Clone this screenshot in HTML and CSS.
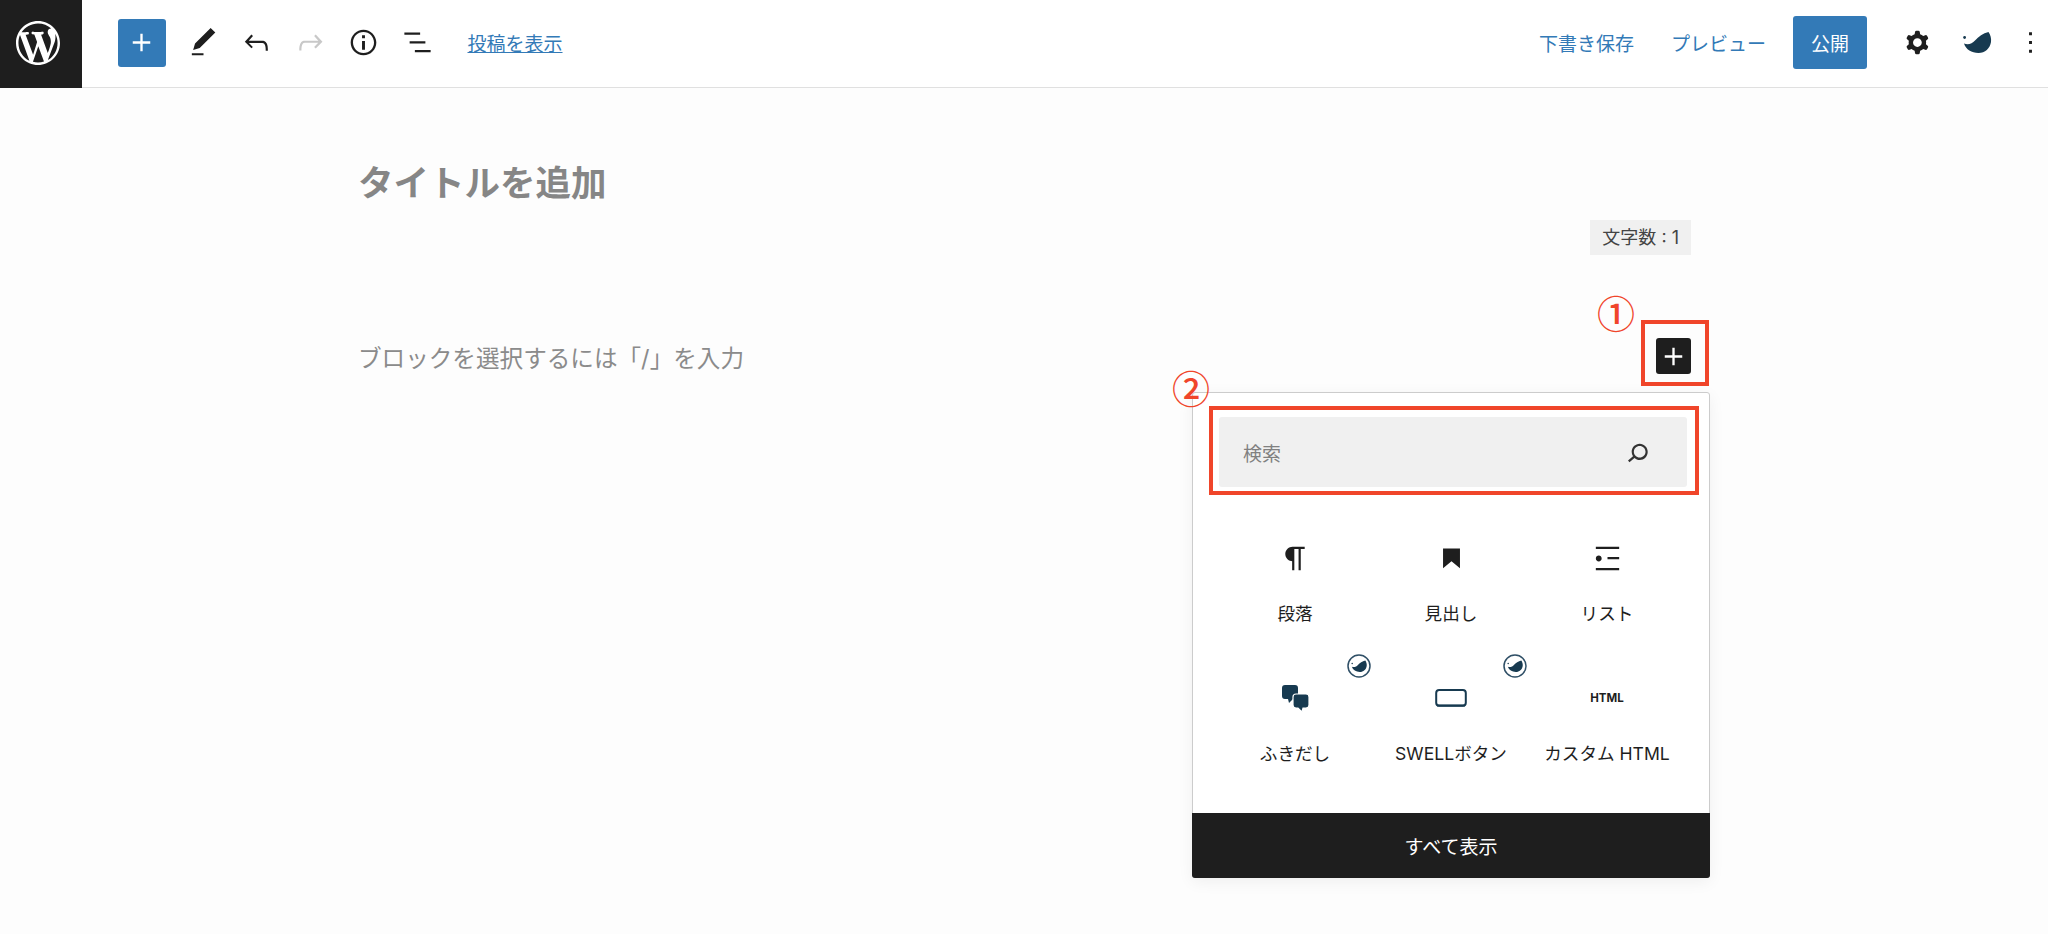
FILE: index.html
```html
<!DOCTYPE html>
<html lang="ja">
<head>
  <meta charset="UTF-8">
  <title>新規投稿を追加</title>
  <meta name="viewport" content="width=device-width, initial-scale=1.0">
  <link rel="stylesheet" href="styles.css">
</head>
<body>
  <div class="page">
    <header class="topbar">
      <a class="wp-logo">
        <svg viewBox="0 0 20 20" width="44" height="44"><path fill="#fff" d="M20 10c0-5.51-4.49-10-10-10C4.48 0 0 4.49 0 10c0 5.52 4.48 10 10 10 5.51 0 10-4.48 10-10zM7.78 15.37L4.37 6.22c.55-.02 1.17-.08 1.17-.08.5-.06.44-1.13-.06-1.11 0 0-1.45.11-2.37.11-.18 0-.37 0-.58-.01C4.12 2.69 6.87 1.11 10 1.11c2.33 0 4.45.87 6.05 2.34-.68-.11-1.65.39-1.65 1.58 0 .74.45 1.36.9 2.1.35.61.55 1.36.55 2.46 0 1.49-1.4 5-1.4 5l-3.03-8.37c.54-.02.82-.17.82-.17.5-.05.44-1.25-.06-1.22 0 0-1.44.12-2.38.12-.87 0-2.33-.12-2.33-.12-.5-.03-.56 1.2-.06 1.22l.92.08 1.26 3.41zM17.41 10c.24-.64.74-1.87.43-4.25.7 1.29 1.05 2.71 1.05 4.25 0 3.29-1.73 6.24-4.4 7.78.97-2.59 1.94-5.2 2.92-7.78zM6.1 18.09C3.12 16.65 1.11 13.53 1.11 10c0-1.3.23-2.48.72-3.59C3.25 10.3 4.67 14.2 6.1 18.09zm4.03-6.63l2.58 6.98c-.86.29-1.76.45-2.71.45-.79 0-1.57-.11-2.29-.33.81-2.38 1.62-4.74 2.42-7.1z"/></svg>
      </a>
      <button class="add-btn">
        <svg viewBox="0 0 24 24" width="35" height="35"><path fill="#fff" d="M18 11.2h-5.2V6h-1.6v5.2H6v1.6h5.2V18h1.6v-5.2H18z"/></svg>
      </button>
      <div class="tools">
        <span class="tool"><svg viewBox="0 0 24 24" width="35" height="35"><path d="M20.1 5.1L16.9 2 6.2 12.7l-1.3 4.4 4.5-1.3L20.1 5.1zM4 20.8h8v-1.5H4v1.5z"/></svg></span>
        <span class="tool"><svg viewBox="0 0 24 24" width="35" height="35"><path d="M18.3 11.7c-.6-.6-1.4-.9-2.3-.9H6.7l2.9-3.3-1.1-1-4.5 5L8.5 16l1-1-2.7-2.7H16c.5 0 .9.2 1.3.5 1 1 1 3.4 1 4.5v.3h1.5v-.2c0-1.5 0-4.3-1.5-5.7z"/></svg></span>
        <span class="tool tool-off"><svg viewBox="0 0 24 24" width="35" height="35"><path d="M15.6 6.5l-1.1 1 2.9 3.3H8c-.9 0-1.7.3-2.3.9-1.4 1.5-1.4 4.2-1.4 5.6v.2h1.5v-.3c0-1.1 0-3.5 1-4.5.3-.3.7-.5 1.3-.5h9.2L14.5 15l1.1 1.1 4.6-4.6-4.6-5z"/></svg></span>
        <span class="tool"><svg viewBox="0 0 24 24" width="35" height="35"><path d="M12 3.2c-4.8 0-8.8 3.9-8.8 8.8 0 4.8 3.9 8.8 8.8 8.8 4.8 0 8.8-3.9 8.8-8.8 0-4.8-4-8.8-8.8-8.8zm0 16c-4 0-7.2-3.3-7.2-7.2C4.8 8 8 4.8 12 4.8s7.2 3.3 7.2 7.2c0 4-3.2 7.2-7.2 7.2zM11 17h2v-6h-2v6zm0-8h2V7h-2v2z"/></svg></span>
        <span class="tool"><svg viewBox="0 0 24 24" width="35" height="35"><path d="M13.8 5.2H3v1.5h10.8V5.2zm-3.6 12v1.5H21v-1.5H10.2zm7.2-6H6.6v1.5h10.8v-1.5z"/></svg></span>
      </div>
      <a class="view-link">投稿を表示</a>
      <div class="actions">
        <a class="action-link">下書き保存</a>
        <a class="action-link">プレビュー</a>
        <button class="publish">公開</button>
        <span class="tool cog"><svg viewBox="0 0 24 24" width="35" height="35"><path fill-rule="evenodd" d="M10.289 4.836A1 1 0 0111.275 4h1.306a1 1 0 01.987.836l.244 1.466c.787.26 1.503.679 2.108 1.218l1.393-.522a1 1 0 011.216.437l.653 1.13a1 1 0 01-.23 1.273l-1.148.944a6.025 6.025 0 010 2.435l1.149.946a1 1 0 01.23 1.272l-.653 1.13a1 1 0 01-1.216.437l-1.394-.522c-.605.54-1.32.958-2.108 1.218l-.244 1.466a1 1 0 01-.987.836h-1.306a1 1 0 01-.986-.836l-.244-1.466a5.995 5.995 0 01-2.108-1.218l-1.394.522a1 1 0 01-1.217-.436l-.653-1.131a1 1 0 01.23-1.272l1.149-.946a6.026 6.026 0 010-2.435l-1.148-.944a1 1 0 01-.23-1.272l.653-1.131a1 1 0 011.217-.437l1.393.522a5.994 5.994 0 012.108-1.218l.244-1.466zM14.929 12a3 3 0 11-6 0 3 3 0 016 0z"/></svg></span>
        <span class="tool"><svg viewBox="0 0 29 22" width="29" height="22"><g fill="#173a50"><path d="M1 11.5C5 13 9 12 12 8.5 15.500 4.500 20 1 25.500 0 27.500 3 28.500 6.500 28 10 27 16.500 22 21 15.500 21 8.500 21 3 17.500 1 11.500Z"/><circle cx="1.6" cy="5.500" r="1.400"/></g></svg></span>
        <span class="tool dots"><svg viewBox="0 0 24 24" width="35" height="35"><path d="M13 19h-2v-2h2v2zm0-6h-2v-2h2v2zm0-6h-2V5h2v2z"/></svg></span>
      </div>
    </header>

    <main class="canvas">
      <h1 class="post-title">タイトルを追加</h1>
      <div class="count-row"><span class="count">文字数 : 1</span></div>
      <div class="block-row">
        <p class="block-hint">ブロックを選択するには「/」を入力</p>
        <button class="inline-add">
          <svg viewBox="0 0 24 24" width="35" height="35"><path fill="#fff" d="M18 11.2h-5.2V6h-1.6v5.2H6v1.6h5.2V18h1.6v-5.2H18z"/></svg>
        </button>
      </div>
    </main>

    <section class="inserter">
      <div class="search">
        <span class="search-text">検索</span>
        <svg viewBox="0 0 24 24" width="35" height="35"><path fill="#333" d="M13.5 6C10.5 6 8 8.5 8 11.5c0 1.1.3 2.1.9 3l-3.4 3 1 1.1 3.4-2.9c1 .9 2.2 1.4 3.6 1.4 3 0 5.5-2.5 5.5-5.5C19 8.5 16.5 6 13.5 6zm0 9.5c-2.2 0-4-1.8-4-4s1.8-4 4-4 4 1.8 4 4-1.8 4-4 4z"/></svg>
      </div>
      <div class="block-grid">
        <div class="block-item">
          <span class="block-icon"><svg viewBox="0 0 24 24" width="35" height="35"><path d="M18.3 4H9.9v-.1l-.9.2c-2.3.4-4 2.4-4 4.8s1.7 4.4 4 4.8l.7.1V20h1.5V5.5h2.9V20h1.5V5.5h2.7V4z"/></svg></span>
          <span class="block-label">段落</span>
        </div>
        <div class="block-item">
          <span class="block-icon"><svg viewBox="0 0 24 24" width="35" height="35"><path d="M6.2 5.2v13.4l5.8-4.8 5.8 4.8V5.2z"/></svg></span>
          <span class="block-label">見出し</span>
        </div>
        <div class="block-item">
          <span class="block-icon"><svg viewBox="0 0 24 24" width="35" height="35"><path d="M4 4v1.5h16V4H4zm8 8.5h8V11h-8v1.5zM4 20h16v-1.5H4V20zm4-8c0-1.1-.9-2-2-2s-2 .9-2 2 .9 2 2 2 2-.9 2-2z"/></svg></span>
          <span class="block-label">リスト</span>
        </div>
        <div class="block-item">
          <span class="swell-badge"><svg viewBox="0 0 24 24" width="24" height="24"><circle cx="12" cy="12" r="11" fill="#fff" stroke="#2f4f66" stroke-width="1.5"/><g fill="#173a50" transform="translate(4.3 6.4) scale(.55)"><path d="M1 11.5C5 13 9 12 12 8.5 15.500 4.500 20 1 25.500 0 27.500 3 28.500 6.500 28 10 27 16.500 22 21 15.500 21 8.500 21 3 17.500 1 11.500Z"/><circle cx="1.6" cy="5.500" r="1.400"/></g></svg></span>
          <span class="block-icon"><svg viewBox="0 0 27 27" width="27" height="27"><g fill="#173a50"><path d="M3 0h10a3 3 0 0 1 3 3v8a3 3 0 0 1-3 3h-2l-4 4-1-4H3a3 3 0 0 1-3-3V3a3 3 0 0 1 3-3Z"/><path stroke="#fff" stroke-width="1.2" d="M14 9h10a3 3 0 0 1 3 3v8a3 3 0 0 1-3 3h-3l-1 4-4-4h-2a3 3 0 0 1-3-3v-8a3 3 0 0 1 3-3Z"/></g></svg></span>
          <span class="block-label">ふきだし</span>
        </div>
        <div class="block-item">
          <span class="swell-badge"><svg viewBox="0 0 24 24" width="24" height="24"><circle cx="12" cy="12" r="11" fill="#fff" stroke="#2f4f66" stroke-width="1.5"/><g fill="#173a50" transform="translate(4.3 6.4) scale(.55)"><path d="M1 11.5C5 13 9 12 12 8.5 15.500 4.500 20 1 25.500 0 27.500 3 28.500 6.500 28 10 27 16.500 22 21 15.500 21 8.500 21 3 17.500 1 11.500Z"/><circle cx="1.6" cy="5.500" r="1.400"/></g></svg></span>
          <span class="block-icon"><svg viewBox="0 0 32 18" width="32" height="18"><rect x="1.2" y="1" width="29.6" height="15.8" rx="3" fill="none" stroke="#173a50" stroke-width="2"/><path d="M2 15.5h28v2H2z" fill="#173a50"/></svg></span>
          <span class="block-label">SWELLボタン</span>
        </div>
        <div class="block-item">
          <span class="block-icon"><span class="html-mark">HTML</span></span>
          <span class="block-label">カスタム HTML</span>
        </div>
      </div>
      <button class="show-all">すべて表示</button>
    </section>

    <!-- red notes drawn on top of the screenshot -->
    <span class="mark mark-add"></span>
    <span class="mark mark-search"></span>
    <span class="num num-1">①</span>
    <span class="num num-2">②</span>
  </div>
</body>
</html>
```

FILE: styles.css
```css
* { box-sizing: border-box; }
body { margin: 0; background: #fdfdfd; color: #1e1e1e; font-family: "Inter", "Noto Sans CJK JP", sans-serif; }
button { font-family: inherit; border: 0; padding: 0; }
svg { display: block; }

.page { position: relative; height: 934px; overflow: hidden; }

.topbar { display: flex; align-items: center; height: 88px; padding-bottom: 2px; background: #fff; border-bottom: 1px solid #e0e0e0; }
.wp-logo { display: flex; align-items: center; align-self: flex-start; width: 82px; height: 88px; padding-left: 16px; padding-bottom: 2px; background: #1e1e1e; }
.add-btn { display: flex; align-items: center; justify-content: center; width: 48px; height: 48px; margin-left: 35.5px; background: #337ab7; border-radius: 3px; }
.tools { display: flex; margin-left: 11px; }
.tool { display: flex; align-items: center; justify-content: center; width: 53.5px; height: 54px; fill: #1e1e1e; }
.tool-off { fill: #c8c8c8; }
.view-link { margin-left: 23.5px; font-size: 19px; color: #337ab7; text-decoration: underline; }

.actions { display: flex; align-items: center; margin-left: auto; }
.action-link { margin-right: 37px; font-size: 19px; color: #337ab7; }
.action-link + .action-link { margin-right: 27px; }
.publish { width: 74px; height: 53px; background: #337ab7; color: #fff; font-size: 19px; border-radius: 3px; }
.cog { margin-left: 24px; margin-right: 6px; }
.dots { width: 36px; margin-left: 8px; }

.canvas { width: 1333px; margin-left: 358px; padding-top: 72px; }
.post-title { margin: 0; font-size: 35.5px; line-height: 48px; font-weight: 700; color: #868686; }
.count-row { display: flex; justify-content: flex-end; margin-top: 12px; }
.count { height: 35px; padding: 0 12px; line-height: 35px; font-size: 18px; color: #444; background: #f0f0f0; }
.block-row { display: flex; justify-content: space-between; margin-top: 83px; }
.block-hint { margin: 0; font-size: 23.6px; line-height: 42px; color: #8b8b8b; }
.inline-add { display: flex; align-items: center; justify-content: center; width: 35px; height: 36px; background: #1e1e1e; border-radius: 3px; }

.inserter { position: absolute; left: 1192px; top: 392px; width: 518px; height: 486px; display: flex; flex-direction: column; background: #fff; border: 1px solid #ccc; border-radius: 3px; box-shadow: 0 4px 16px rgba(0, 0, 0, .06); }
.search { display: flex; align-items: center; justify-content: space-between; height: 70px; margin: 24px 22px 0 26px; padding: 0 24px; background: #f0f0f0; border-radius: 3px; }
.search-text { font-size: 19px; color: #808080; }
.search svg { margin-right: 8px; }

.block-grid { display: grid; grid-template-columns: repeat(3, 1fr); grid-auto-rows: 85px; row-gap: 54.5px; margin: 54px 24px 0 24px; }
.block-item { position: relative; display: flex; flex-direction: column; align-items: center; fill: #1e1e1e; }
.block-icon { display: flex; align-items: center; justify-content: center; height: 35px; }
.block-label { margin-top: 26px; font-size: 17.6px; line-height: 24px; white-space: nowrap; }
.html-mark { font-size: 11.5px; font-weight: 700; }
.swell-badge { position: absolute; left: calc(50% + 52px); top: -27px; }

.show-all { margin: auto -1px -1px; height: 65px; background: #1e1e1e; color: #fff; font-size: 19px; border-radius: 0 0 3px 3px; }

.mark { position: absolute; border: 4px solid #f0452a; }
.mark-add { left: 1641px; top: 320px; width: 68px; height: 66px; }
.mark-search { left: 1209px; top: 406px; width: 490px; height: 89px; }
.num { position: absolute; font-family: "Noto Sans CJK JP", sans-serif; font-size: 38px; font-weight: 500; line-height: 44px; width: 44px; text-align: center; color: #f0452a; }
.num-1 { left: 1594px; top: 290px; }
.num-2 { left: 1169px; top: 365px; }
```
